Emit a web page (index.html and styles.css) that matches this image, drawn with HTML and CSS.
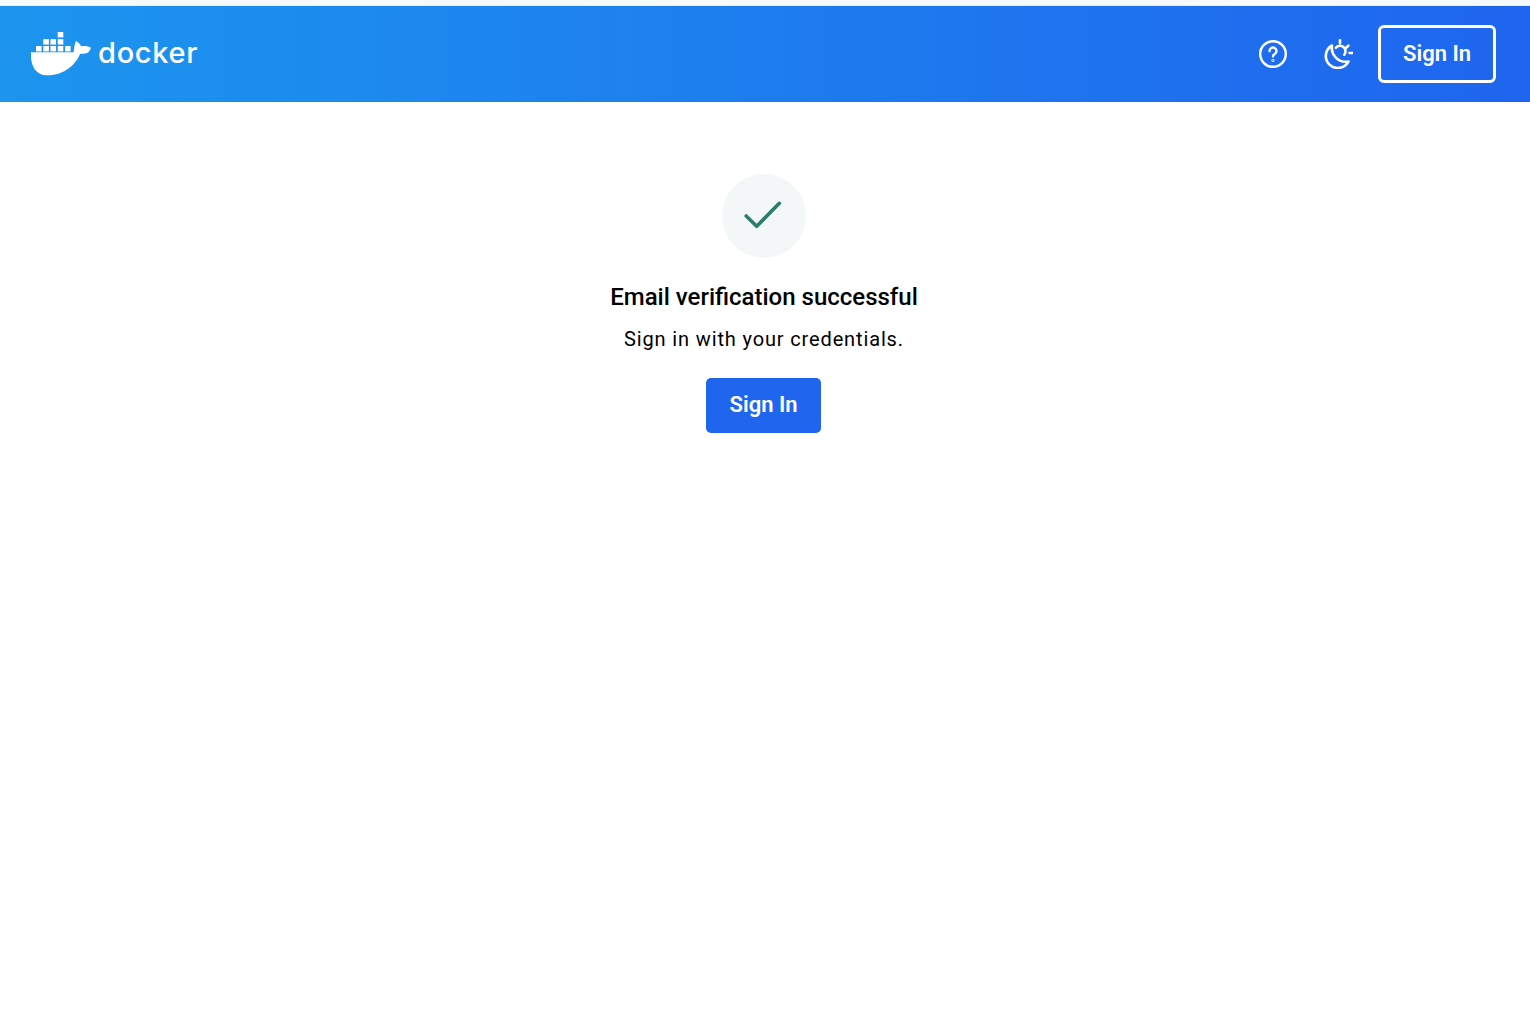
FILE: index.html
```html
<!DOCTYPE html>
<html lang="en">
<head>
<meta charset="utf-8">
<title>Docker</title>
<link rel="stylesheet" href="styles.css">
</head>
<body>
<div class="strip"></div>
<header class="topbar">
  <a class="brand" href="#">
    <svg class="whale" width="62" height="46" viewBox="0 0 62 46" aria-hidden="true">
      <g fill="#fff">
        <rect x="6" y="15" width="5.600" height="5.400"/><rect x="13.300" y="15" width="5.600" height="5.400"/><rect x="20.400" y="15" width="5.600" height="5.400"/><rect x="27.700" y="15" width="5.600" height="5.400"/><rect x="35" y="15" width="5.600" height="5.400"/>
        <rect x="13.300" y="8.200" width="5.600" height="5.400"/><rect x="20.400" y="8.200" width="5.600" height="5.400"/><rect x="27.700" y="8.200" width="5.600" height="5.400"/>
        <rect x="27.700" y="1" width="5.600" height="5.400"/>
        <path d="M1 21.300H43.500c.8-3 .6-8 2.500-11.300 2.500 1.500 4.500 3 5 5.500 3-.8 7-.5 10 1.200-1 3-3 5.500-5.500 5.700-2 .2-3.500.2-5.500.6C46 33 35 44.300 17 44.300 6 44.300 1 35 1 25z"/>
      </g>
    </svg>
    <span class="wordmark">docker</span>
  </a>
  <nav class="actions">
    <button class="iconbtn" aria-label="Help">
      <svg width="28" height="28" viewBox="0 0 28 28" fill="none" stroke="#fff" stroke-width="2.400" stroke-linecap="round" stroke-linejoin="round"><circle cx="14" cy="14" r="12.800"/><path d="M10.500 11a3.500 3.500 0 1 1 5.300 3c-1.200.8-1.800 1.300-1.800 2.300"/><circle cx="14" cy="20.300" r=".4"/></svg>
    </button>
    <button class="iconbtn" aria-label="Theme">
      <svg width="30" height="30" viewBox="0 0 30 30" fill="none" stroke="#fff" stroke-width="2.600" stroke-linecap="round" stroke-linejoin="round"><path d="M9 6.500A12 12 0 1 0 25.500 22.500 14 14 0 0 1 9 6.500z"/><path d="M12.800 8.800A5.200 5.200 0 1 1 21.300 15.700"/><path d="M17 1.200v3M25.300 6.700 22.800 9M26.500 14h2.800"/></svg>
    </button>
    <button class="btn-outline">Sign In</button>
  </nav>
</header>
<main class="content">
  <div class="badge">
    <svg width="40" height="32" viewBox="0 0 40 32" fill="none" stroke="#2d7d6f" stroke-width="3.600" stroke-linecap="round" stroke-linejoin="round"><path d="M2.200 16 12.700 26.300 35.300 3.300"/></svg>
  </div>
  <h1 class="title">Email verification successful</h1>
  <p class="sub">Sign in with your credentials.</p>
  <button class="btn-solid">Sign In</button>
</main>
</body>
</html>
```
FILE: styles.css
```css
* { box-sizing: border-box; }
html, body { margin: 0; padding: 0; }
body { background: #fff; font-family: Roboto, "Liberation Sans", sans-serif; color: #000; }
.strip { height: 6px; background: #f7fafc; border-bottom: 1px solid #e8f0f6; }
.topbar {
  height: 96px;
  display: flex;
  align-items: center;
  justify-content: space-between;
  padding: 0 34px 0 30px;
  background: linear-gradient(90deg, #1c95ee 0%, #1f65ef 100%);
}
.brand { display: flex; align-items: center; gap: 6px; text-decoration: none; color: #fff; }
.whale { display: block; }
.wordmark { font-family: Inter, sans-serif; font-size: 29px; font-weight: 500; letter-spacing: .7px; line-height: 34px; margin-top: -3px; }
.actions { display: flex; align-items: center; }
.iconbtn { width: 30px; height: 30px; padding: 0; margin-right: 35px; background: none; border: 0; display: flex; align-items: center; justify-content: center; }
.iconbtn + .iconbtn { margin-right: 25px; }
.btn-outline {
  width: 118px; height: 58px; padding: 0;
  background: transparent; border: 3px solid #fff; border-radius: 6px;
  color: #fff; font: 600 22px/24px Roboto, sans-serif;
}
.content { display: flex; flex-direction: column; align-items: center; padding: 72px 2px 0 0; }
.badge { width: 84px; height: 84px; border-radius: 50%; background: #f3f7f8; display: flex; align-items: center; justify-content: center; }
.title { margin: 24px 0 0; font: 500 24px/30px Roboto, sans-serif; }
.sub { margin: 14px 0 0; font: 400 20px/26px Roboto, sans-serif; letter-spacing: .86px; }
.btn-solid {
  margin: 26px 1px 0 0; width: 115px; height: 55px; padding: 0 0 2px;
  background: #2065ee; border: 0; border-radius: 5px;
  color: #fff; font: 600 22px/24px Roboto, sans-serif;
}
```
